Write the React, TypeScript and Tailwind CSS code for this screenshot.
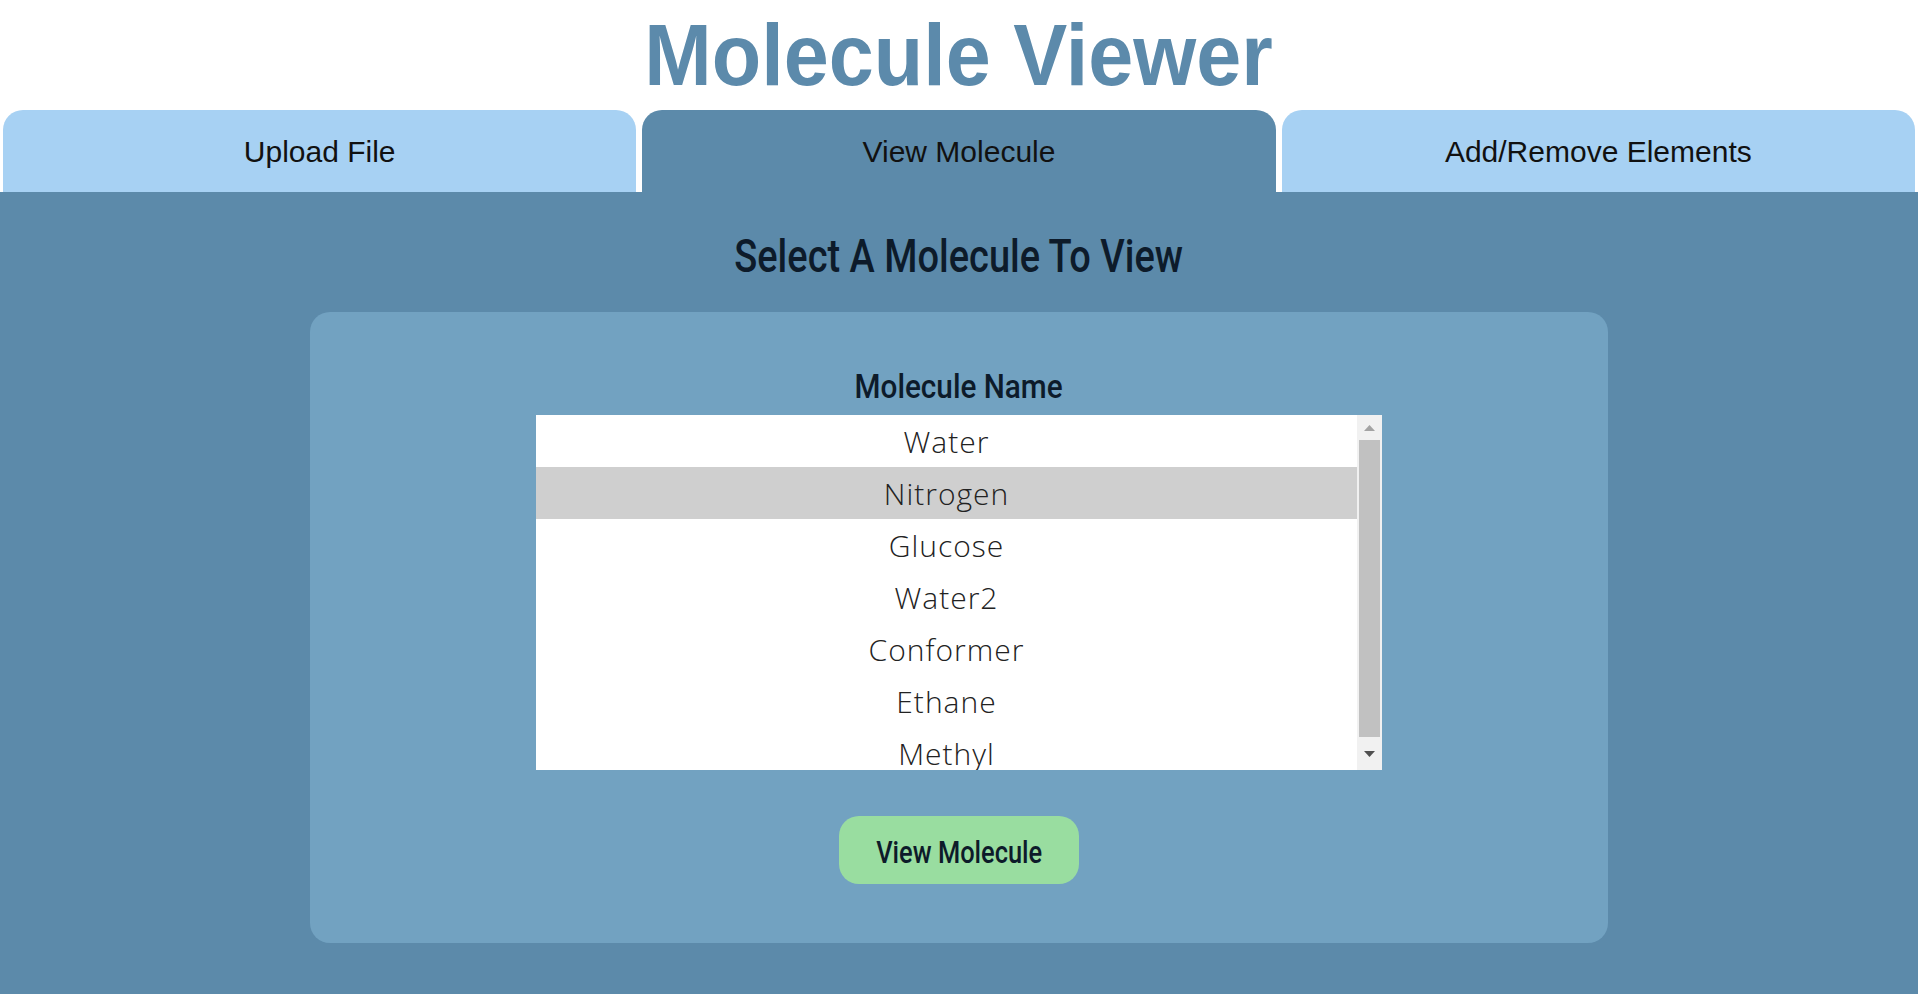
import React from "react";

const molecules = ["Water", "Nitrogen", "Glucose", "Water2", "Conformer", "Ethane", "Methyl"];

export default function App() {
  return (
    <div className="min-h-screen flex flex-col bg-white">
      <div className="pt-[11px] pb-[11px] flex justify-center">
        <h1 className="h-[88px] inline-block scale-x-[0.92] text-center text-[88px] leading-[88px] font-bold text-[#5c8aab] font-['Liberation_Sans',Arial,sans-serif]">
          Molecule Viewer
        </h1>
      </div>
      <div className="flex">
        {["Upload File", "View Molecule", "Add/Remove Elements"].map((t, i) => (
          <div
            key={t}
            className={
              "flex-1 mx-[3px] h-[82px] rounded-t-[20px] flex items-center justify-center text-[30px] text-[#111] font-['Liberation_Sans',Arial,sans-serif] " +
              (i === 1 ? "bg-[#5c8aaa]" : "bg-[#a7d1f3]")
            }
          >
            {t}
          </div>
        ))}
      </div>
      <div className="flex-1 bg-[#5c8aaa] pt-[42px] pb-[51px] flex flex-col items-center">
        <h2 className="h-[44px] inline-block scale-x-[0.826] text-[46px] leading-[44px] font-medium text-[#0d1b2a] font-['Roboto',sans-serif]">
          Select A Molecule To View
        </h2>
        <div className="mt-[34px] w-[1298px] rounded-[20px] bg-[#72a2c1] pt-[57px] pb-[59px] flex flex-col items-center">
          <div className="h-[34px] inline-block scale-x-[0.9] text-[33px] leading-[36px] font-medium text-[#0d1b2a] font-['Roboto',sans-serif]">
            Molecule Name
          </div>
          <div className="mt-[12px] w-[846px] h-[355px] bg-white flex overflow-hidden">
            <div className="flex-1 flex flex-col overflow-hidden">
              {molecules.map((m, i) => (
                <div
                  key={m}
                  className={
                    "h-[52px] shrink-0 flex items-center justify-center text-[30px] font-light tracking-[1px] text-[#222] font-['Open_Sans','Lato',sans-serif] " +
                    (i === 1 ? "bg-[#cfcfcf]" : "")
                  }
                >
                  {m}
                </div>
              ))}
            </div>
            <div className="w-[25px] bg-[#f1f1f1] flex flex-col items-center">
              <div className="h-[25px] w-full flex items-center justify-center">
                <svg width="11" height="6" viewBox="0 0 11 6">
                  <polygon points="5.5,0 11,6 0,6" fill="#a3a3a3" />
                </svg>
              </div>
              <div className="w-[21px] h-[297px] bg-[#c1c1c1]" />
              <div className="flex-1 w-full flex items-center justify-center">
                <svg width="11" height="6" viewBox="0 0 11 6">
                  <polygon points="0,0 11,0 5.5,6" fill="#505050" />
                </svg>
              </div>
            </div>
          </div>
          <button className="mt-[46px] w-[240px] h-[68px] rounded-[20px] bg-[#99dda0] flex items-center justify-center">
            <span className="mt-[6px] inline-block scale-x-[0.82] text-[31px] leading-[34px] font-medium text-[#0d1b2a] font-['Roboto',sans-serif]">
              View Molecule
            </span>
          </button>
        </div>
      </div>
    </div>
  );
}
